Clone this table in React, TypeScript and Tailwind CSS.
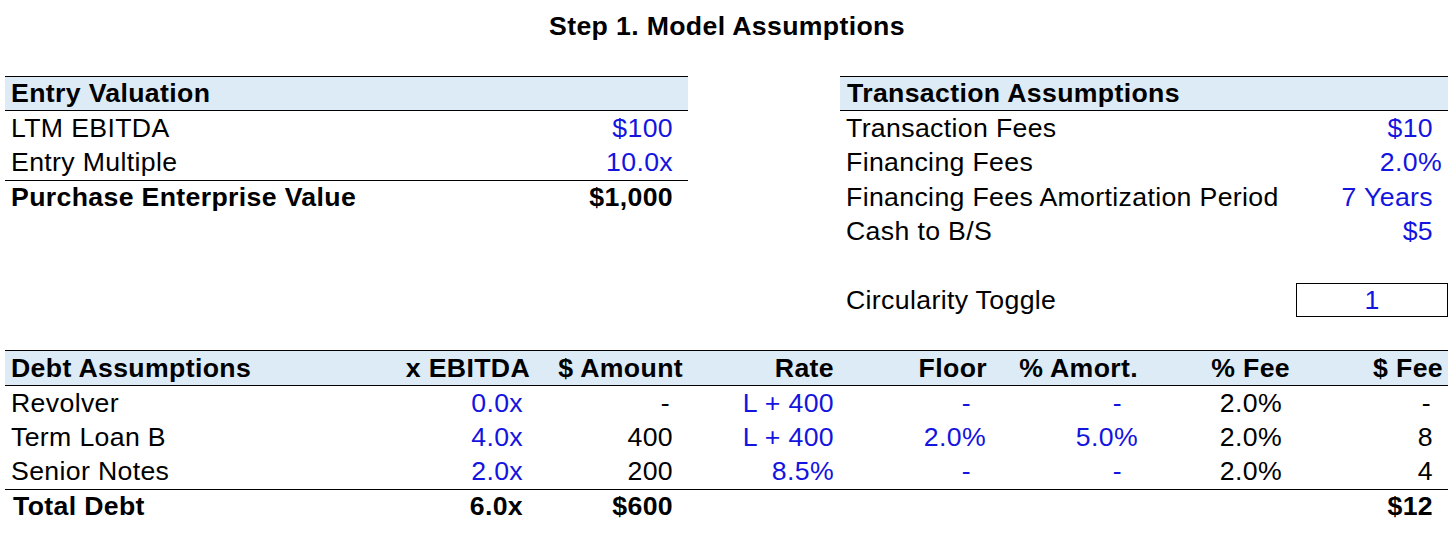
import React from "react";

const BLUE = "text-[#1414e0]";

type Cell = { t: string; blue?: boolean; bold?: boolean; pr: number };

function Row({
  children,
  className = "",
}: {
  children: React.ReactNode;
  className?: string;
}) {
  return <div className={`flex h-[34.3px] items-center ${className}`}>{children}</div>;
}

const debtCols = [
  { w: "w-[379px]" },
  { w: "w-[152px]" },
  { w: "w-[152px]" },
  { w: "w-[152px]" },
  { w: "w-[152px]" },
  { w: "w-[152px]" },
  { w: "w-[152px]" },
  { w: "w-[152px]" },
];

function ValCell({ c, w }: { c: Cell; w: string }) {
  return (
    <div
      className={`${w} shrink-0 text-right ${c.blue ? BLUE : "text-black"} ${c.bold ? "font-bold" : ""}`}
      style={{ paddingRight: c.pr }}
    >
      {c.t}
    </div>
  );
}

export default function App() {
  const debtRows: { label: string; cells: Cell[] }[] = [
    {
      label: "Revolver",
      cells: [
        { t: "0.0x", blue: true, pr: 13 },
        { t: "-", pr: 18 },
        { t: "L + 400", blue: true, pr: 6 },
        { t: "-", blue: true, pr: 21 },
        { t: "-", blue: true, pr: 22 },
        { t: "2.0%", pr: 14 },
        { t: "-", pr: 17 },
      ],
    },
    {
      label: "Term Loan B",
      cells: [
        { t: "4.0x", blue: true, pr: 13 },
        { t: "400", pr: 15 },
        { t: "L + 400", blue: true, pr: 6 },
        { t: "2.0%", blue: true, pr: 6 },
        { t: "5.0%", blue: true, pr: 6 },
        { t: "2.0%", pr: 14 },
        { t: "8", pr: 15 },
      ],
    },
    {
      label: "Senior Notes",
      cells: [
        { t: "2.0x", blue: true, pr: 13 },
        { t: "200", pr: 15 },
        { t: "8.5%", blue: true, pr: 6 },
        { t: "-", blue: true, pr: 21 },
        { t: "-", blue: true, pr: 22 },
        { t: "2.0%", pr: 14 },
        { t: "4", pr: 15 },
      ],
    },
  ];

  const headers = ["x EBITDA", "$ Amount", "Rate", "Floor", "% Amort.", "% Fee", "$ Fee"];
  const headerPr = [6, 5, 6, 5, 6, 6, 5];

  return (
    <div
      className="w-[1454px] h-[552px] bg-white text-black text-[26.67px] tracking-[0.35px] leading-none overflow-hidden"
      style={{ fontFamily: '"Liberation Sans", Arial, sans-serif' }}
    >
      <div className="h-[52px] leading-[52px] text-center font-bold">Step 1. Model Assumptions</div>

      <div className="mt-[24px] flex pl-[5px]">
        {/* Entry Valuation */}
        <div className="w-[683px] shrink-0">
          <Row className="border-y border-black bg-[#ddebf7] h-[35.3px] font-bold">
            <div className="pl-[6px]">Entry Valuation</div>
          </Row>
          <Row>
            <div className="flex-1 pl-[6px]">LTM EBITDA</div>
            <div className={`pr-[15px] ${BLUE}`}>$100</div>
          </Row>
          <Row>
            <div className="flex-1 pl-[6px]">Entry Multiple</div>
            <div className={`pr-[15px] ${BLUE}`}>10.0x</div>
          </Row>
          <Row className="border-t border-black font-bold">
            <div className="flex-1 pl-[6px]">Purchase Enterprise Value</div>
            <div className="pr-[15px]">$1,000</div>
          </Row>
        </div>

        <div className="w-[152px] shrink-0" />

        {/* Transaction Assumptions */}
        <div className="w-[608px] shrink-0">
          <Row className="border-y border-black bg-[#ddebf7] h-[35.3px] font-bold">
            <div className="pl-[7px]">Transaction Assumptions</div>
          </Row>
          <Row>
            <div className="flex-1 pl-[6px]">Transaction Fees</div>
            <div className={`pr-[15px] ${BLUE}`}>$10</div>
          </Row>
          <Row>
            <div className="flex-1 pl-[6px]">Financing Fees</div>
            <div className={`pr-[6px] ${BLUE}`}>2.0%</div>
          </Row>
          <Row>
            <div className="flex-1 pl-[6px]">Financing Fees Amortization Period</div>
            <div className={`pr-[15px] ${BLUE}`}>7 Years</div>
          </Row>
          <Row>
            <div className="flex-1 pl-[6px]">Cash to B/S</div>
            <div className={`pr-[15px] ${BLUE}`}>$5</div>
          </Row>
          <Row>
            <div />
          </Row>
          <Row>
            <div className="flex-1 pl-[6px]">Circularity Toggle</div>
            <div
              className={`w-[152px] h-full border border-black flex items-center justify-center ${BLUE}`}
            >
              1
            </div>
          </Row>
        </div>
      </div>

      {/* Debt Assumptions */}
      <div className="mt-[33px] ml-[5px] w-[1443px]">
        <Row className="border-y border-black bg-[#ddebf7] h-[36px] font-bold">
          <div className={`${debtCols[0].w} shrink-0 pl-[6px]`}>Debt Assumptions</div>
          {headers.map((h, i) => (
            <div
              key={h}
              className={`${debtCols[i + 1].w} shrink-0 text-right`}
              style={{ paddingRight: headerPr[i] }}
            >
              {h}
            </div>
          ))}
        </Row>
        {debtRows.map((r) => (
          <Row key={r.label}>
            <div className={`${debtCols[0].w} shrink-0 pl-[6px]`}>{r.label}</div>
            {r.cells.map((c, i) => (
              <ValCell key={i} c={c} w={debtCols[i + 1].w} />
            ))}
          </Row>
        ))}
        <Row className="border-t border-black font-bold">
          <div className={`${debtCols[0].w} shrink-0 pl-[8px]`}>Total Debt</div>
          <div className={`${debtCols[1].w} shrink-0 text-right pr-[13px]`}>6.0x</div>
          <div className={`${debtCols[2].w} shrink-0 text-right pr-[15px]`}>$600</div>
          <div className="w-[608px] shrink-0" />
          <div className={`${debtCols[7].w} shrink-0 text-right pr-[15px]`}>$12</div>
        </Row>
      </div>
    </div>
  );
}
